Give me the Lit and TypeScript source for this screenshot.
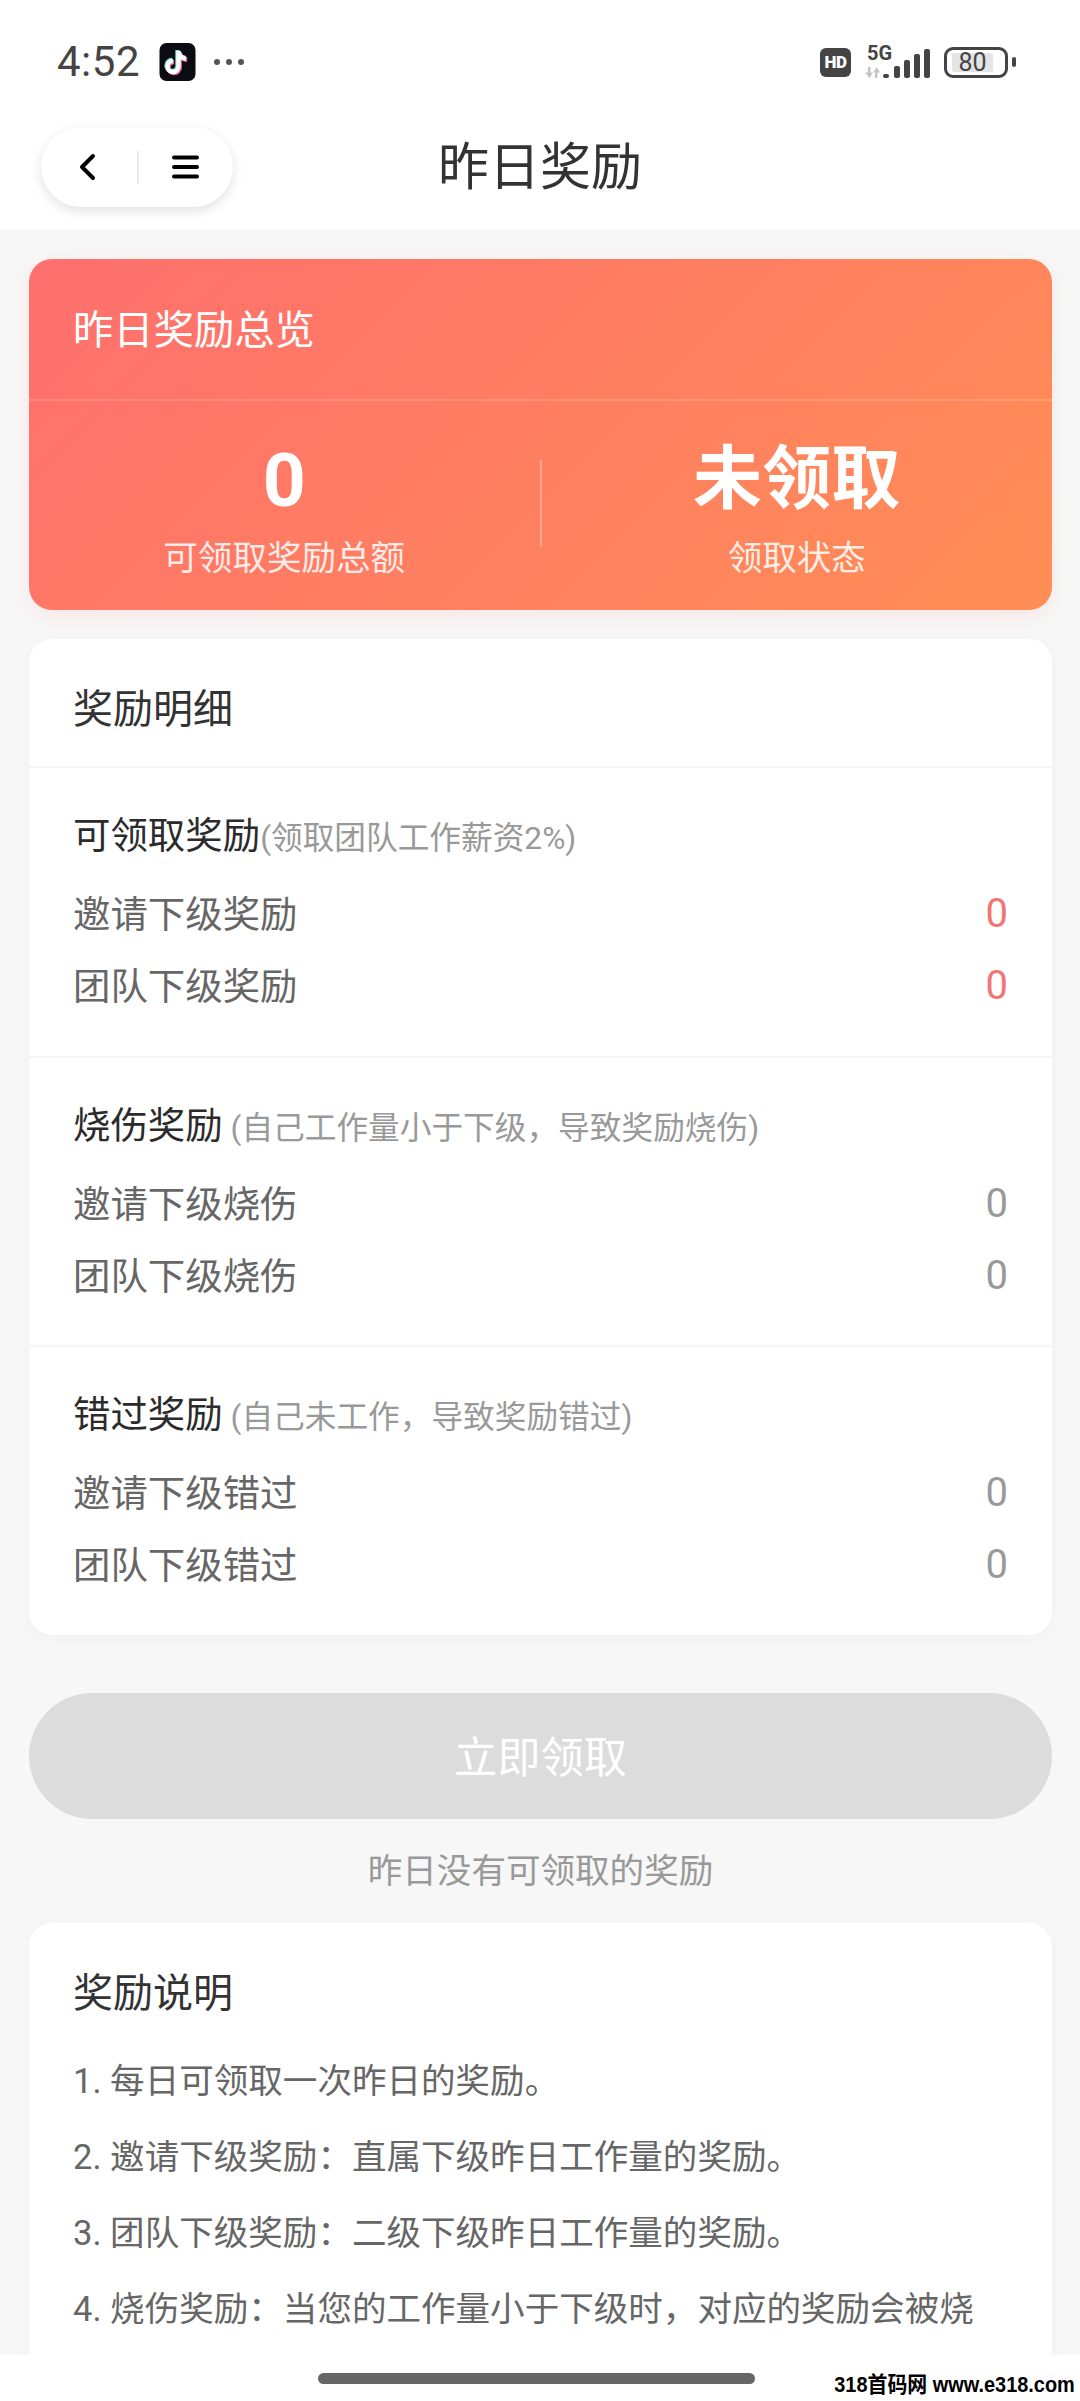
import { css, html, LitElement, svg } from 'lit';
import { customElement } from 'lit/decorators.js';

const SECTIONS = [
  {
    title: '可领取奖励',
    note: '(领取团队工作薪资2%)',
    rows: ['邀请下级奖励', '团队下级奖励'],
    hot: true,
  },
  {
    title: '烧伤奖励',
    note: ' (自己工作量小于下级，导致奖励烧伤)',
    rows: ['邀请下级烧伤', '团队下级烧伤'],
    hot: false,
  },
  {
    title: '错过奖励',
    note: ' (自己未工作，导致奖励错过)',
    rows: ['邀请下级错过', '团队下级错过'],
    hot: false,
  },
];

// the last rule runs on under the home bar in the screenshot, cut at the fold
const RULES = [
  '1. 每日可领取一次昨日的奖励。',
  '2. 邀请下级奖励：直属下级昨日工作量的奖励。',
  '3. 团队下级奖励：二级下级昨日工作量的奖励。',
  '4. 烧伤奖励：当您的工作量小于下级时，对应的奖励会被烧',
];

const SIGNAL_BARS = [
  { x: 18, y: 28, h: 4 },
  { x: 29, y: 20, h: 12 },
  { x: 39, y: 14, h: 18 },
  { x: 49, y: 8, h: 24 },
  { x: 59, y: 3, h: 29 },
];

const NOTE_PATH = 'M19 8v15.500a5.500 5.500 0 1 1-5.500-5.500M19 9c.8 4 3.600 6.300 7.500 6.800';

@customElement('app-root')
export class AppRoot extends LitElement {
  static override styles = css`
    :host {
      display: block;
      position: relative;
      height: 2401px;
      overflow: hidden;
      background: #f7f7f7;
      font-family: Roboto, 'Noto Sans CJK SC', sans-serif;
      color: #333;
    }

    .top {
      background: #fff;
    }

    .status {
      height: 124px;
      padding: 0 64px 0 57px;
      box-sizing: border-box;
      display: flex;
      align-items: center;
      justify-content: space-between;
    }

    .status-left,
    .status-right {
      display: flex;
      align-items: center;
    }

    .time {
      font-size: 42px;
      line-height: 50px;
      color: #444;
      letter-spacing: 0.5px;
    }

    .tiktok {
      margin-left: 19px;
      display: block;
    }

    .dots {
      margin-left: 18px;
      display: flex;
      gap: 6px;
    }

    .dots i {
      width: 6px;
      height: 6px;
      border-radius: 50%;
      background: #555;
    }

    .status-right {
      gap: 14px;
    }

    .status-right svg {
      display: block;
    }

    .hd {
      width: 31px;
      height: 29px;
      border-radius: 6px;
      background: #444;
      color: #fff;
      font-size: 17px;
      font-weight: 900;
      line-height: 29px;
      text-align: center;
      letter-spacing: -0.5px;
    }

    .net {
      position: relative;
      width: 65px;
      height: 32px;
    }

    .net span {
      position: absolute;
      left: 2px;
      top: -3px;
      font-size: 20px;
      line-height: 20px;
      font-weight: 700;
      color: #444;
    }

    .battery {
      display: flex;
      align-items: center;
      gap: 4px;
    }

    .battery-body {
      width: 64px;
      height: 31px;
      box-sizing: border-box;
      border: 3px solid #444;
      border-radius: 9px;
      padding: 3px 12px 3px 5px;
      display: flex;
    }

    .battery-fill {
      flex: 1;
      background: #e4e4e4;
      border-radius: 2px;
      font-size: 25px;
      line-height: 19px;
      text-align: center;
      color: #444;
    }

    .battery-nub {
      width: 4px;
      height: 10px;
      border-radius: 2px;
      background: #444;
    }

    .nav {
      height: 106px;
      box-sizing: border-box;
      padding: 3px 41px 23px;
      display: grid;
      grid-template-columns: 1fr auto 1fr;
      align-items: center;
    }

    .capsule {
      justify-self: start;
      width: 192px;
      height: 80px;
      border-radius: 40px;
      background: #fff;
      box-shadow: 0 4px 12px rgba(0, 0, 0, 0.12);
      display: flex;
      align-items: center;
    }

    .capsule svg {
      display: block;
    }

    .capsule .back {
      margin-left: 37px;
    }

    .capsule .sep {
      margin-left: 41px;
      width: 2px;
      height: 33px;
      background: #e8e8e8;
    }

    .capsule .menu {
      margin-left: 33px;
    }

    .page-title {
      font-size: 51px;
      line-height: 60px;
      font-weight: 400;
      color: #333;
      margin: 2px 0 0;
    }

    main {
      padding: 29px 28px 0 29px;
    }

    .hero {
      height: 351px;
      border-radius: 23px;
      background: linear-gradient(135deg, #ff6f6e, #ff8e55);
      box-shadow: 0 6px 22px rgba(255, 107, 107, 0.12);
      color: #fff;
      display: flex;
      flex-direction: column;
    }

    .hero-head {
      height: 142px;
      box-sizing: border-box;
      padding: 0 44px 6px;
      display: flex;
      align-items: center;
      font-size: 40.32px;
      border-bottom: 2px solid rgba(255, 255, 255, 0.15);
    }

    .hero-stats {
      flex: 1;
      display: grid;
      grid-template-columns: 1fr 2px 1fr;
      align-items: center;
    }

    .stat {
      display: flex;
      flex-direction: column;
      align-items: center;
      padding-top: 3px;
    }

    .stat b {
      font-size: 69.12px;
      line-height: 94px;
      font-weight: 700;
    }

    .stat b.num {
      font-size: 75px;
    }

    .stat span {
      margin-top: 8px;
      font-size: 34.56px;
      line-height: 46px;
      opacity: 0.85;
    }

    .stat-sep {
      height: 87px;
      margin-top: -4px;
      background: rgba(255, 255, 255, 0.3);
    }

    .card {
      background: #fff;
      border-radius: 23px;
      box-shadow: 0 3px 14px rgba(0, 0, 0, 0.03);
    }

    .details {
      margin-top: 29px;
    }

    .card-title {
      margin: 0;
      font-size: 40px;
      line-height: 48px;
      font-weight: 400;
      color: #333;
    }

    .details .card-title {
      height: 127px;
      box-sizing: border-box;
      padding: 47px 44px 0;
    }

    .section {
      height: 289.5px;
      box-sizing: border-box;
      padding: 43px 44px 0;
      border-top: 2px solid #f5f5f5;
    }

    .section-head {
      display: flex;
      align-items: baseline;
      height: 50px;
      line-height: 50px;
      font-size: 37.44px;
      color: #2b2b2b;
      margin-bottom: 15px;
      white-space: pre;
    }

    .section-head small {
      font-size: 31.68px;
      color: #999;
    }

    .row {
      height: 72px;
      display: flex;
      align-items: center;
      justify-content: space-between;
      font-size: 37.44px;
      color: #666;
    }

    .row b {
      padding-top: 3px;
      font-weight: 400;
      color: #999;
      font-size: 40px;
    }

    .row b.hot {
      color: #f27474;
    }

    .claim {
      margin-top: 58px;
      width: 100%;
      height: 126px;
      padding: 0 0 4px;
      border: none;
      border-radius: 63px;
      background: #dcdcdc;
      color: #fff;
      font-family: inherit;
      font-size: 43.2px;
      display: block;
    }

    .hint {
      margin: 28px 0 0;
      text-align: center;
      font-size: 34.56px;
      line-height: 48px;
      color: #999;
    }

    .rules {
      margin-top: 28px;
      padding: 47px 44px 120px;
    }

    .rules ol {
      list-style: none;
      margin: 25px 0 0;
      padding: 0;
    }

    .rules li {
      font-size: 34.56px;
      line-height: 76px;
      color: #666;
      white-space: nowrap;
    }

    .bottom {
      position: absolute;
      left: 0;
      right: 0;
      bottom: 0;
      height: 46px;
      background: #fff;
    }

    .home {
      position: absolute;
      left: 318px;
      top: 18px;
      width: 437px;
      height: 11px;
      border-radius: 6px;
      background: #666;
    }

    .mark {
      position: absolute;
      right: 5px;
      top: 17px;
      font-family: 'Liberation Sans', 'Noto Sans CJK SC', sans-serif;
      font-size: 22px;
      line-height: 26px;
      font-weight: 700;
      color: #000;
      white-space: nowrap;
      transform: scaleX(0.905);
      transform-origin: right center;
    }
  `;

  private renderStatus() {
    return html`
      <div class="status">
        <div class="status-left">
          <span class="time">4:52</span>
          <svg class="tiktok" width="37" height="38" viewBox="0 0 36 38">
            <rect width="36" height="38" rx="7" fill="#0b0b12" />
            <g fill="none" stroke-width="4.4">
              <path transform="translate(-1 -1)" stroke="#6fe3e1" d=${NOTE_PATH} />
              <path transform="translate(1.200 1)" stroke="#f0668c" d=${NOTE_PATH} />
              <path stroke="#fff" d=${NOTE_PATH} />
            </g>
          </svg>
          <span class="dots"><i></i><i></i><i></i></span>
        </div>
        <div class="status-right">
          <span class="hd">HD</span>
          <div class="net">
            <span>5G</span>
            <svg width="65" height="32" viewBox="0 0 65 32">
              <path fill="#c4c4c4" d="M3 21h2.500v5.500H8l-3.500 5.500L0 26.500h3z" />
              <path fill="#c4c4c4" d="M10 32h2.500v-5.500H15L11.500 21 8.500 26.500H10z" />
              ${SIGNAL_BARS.map(
                (b) =>
                  svg`<rect x=${b.x} y=${b.y} width="6" height=${b.h} rx="2" fill="#444" />`,
              )}
            </svg>
          </div>
          <div class="battery">
            <div class="battery-body"><div class="battery-fill">80</div></div>
            <i class="battery-nub"></i>
          </div>
        </div>
      </div>
    `;
  }

  private renderNav() {
    return html`
      <div class="nav">
        <div class="capsule">
          <svg class="back" width="18" height="28" viewBox="0 0 18 28">
            <path
              d="M15 3L4 14l11 11"
              fill="none"
              stroke="#000"
              stroke-width="4"
              stroke-linecap="round"
              stroke-linejoin="round"
            />
          </svg>
          <i class="sep"></i>
          <svg class="menu" width="27" height="24" viewBox="0 0 27 24">
            <path
              d="M2 2.500h23M2 12h23M2 21.500h23"
              stroke="#000"
              stroke-width="4"
              stroke-linecap="round"
            />
          </svg>
        </div>
        <h1 class="page-title">昨日奖励</h1>
      </div>
    `;
  }

  override render() {
    return html`
      <div class="top">${this.renderStatus()} ${this.renderNav()}</div>
      <main>
        <section class="hero">
          <div class="hero-head">昨日奖励总览</div>
          <div class="hero-stats">
            <div class="stat"><b class="num">0</b><span>可领取奖励总额</span></div>
            <i class="stat-sep"></i>
            <div class="stat"><b>未领取</b><span>领取状态</span></div>
          </div>
        </section>

        <section class="card details">
          <h2 class="card-title">奖励明细</h2>
          ${SECTIONS.map(
            (s) => html`
              <div class="section">
                <div class="section-head">${s.title}<small>${s.note}</small></div>
                ${s.rows.map(
                  (r) => html`
                    <div class="row">
                      <span>${r}</span><b class=${s.hot ? 'hot' : ''}>0</b>
                    </div>
                  `,
                )}
              </div>
            `,
          )}
        </section>

        <button class="claim" type="button" disabled>立即领取</button>
        <p class="hint">昨日没有可领取的奖励</p>

        <section class="card rules">
          <h2 class="card-title">奖励说明</h2>
          <ol>
            ${RULES.map((r) => html`<li>${r}</li>`)}
          </ol>
        </section>
      </main>
      <div class="bottom">
        <i class="home"></i>
        <span class="mark">318首码网 www.e318.com</span>
      </div>
    `;
  }
}
